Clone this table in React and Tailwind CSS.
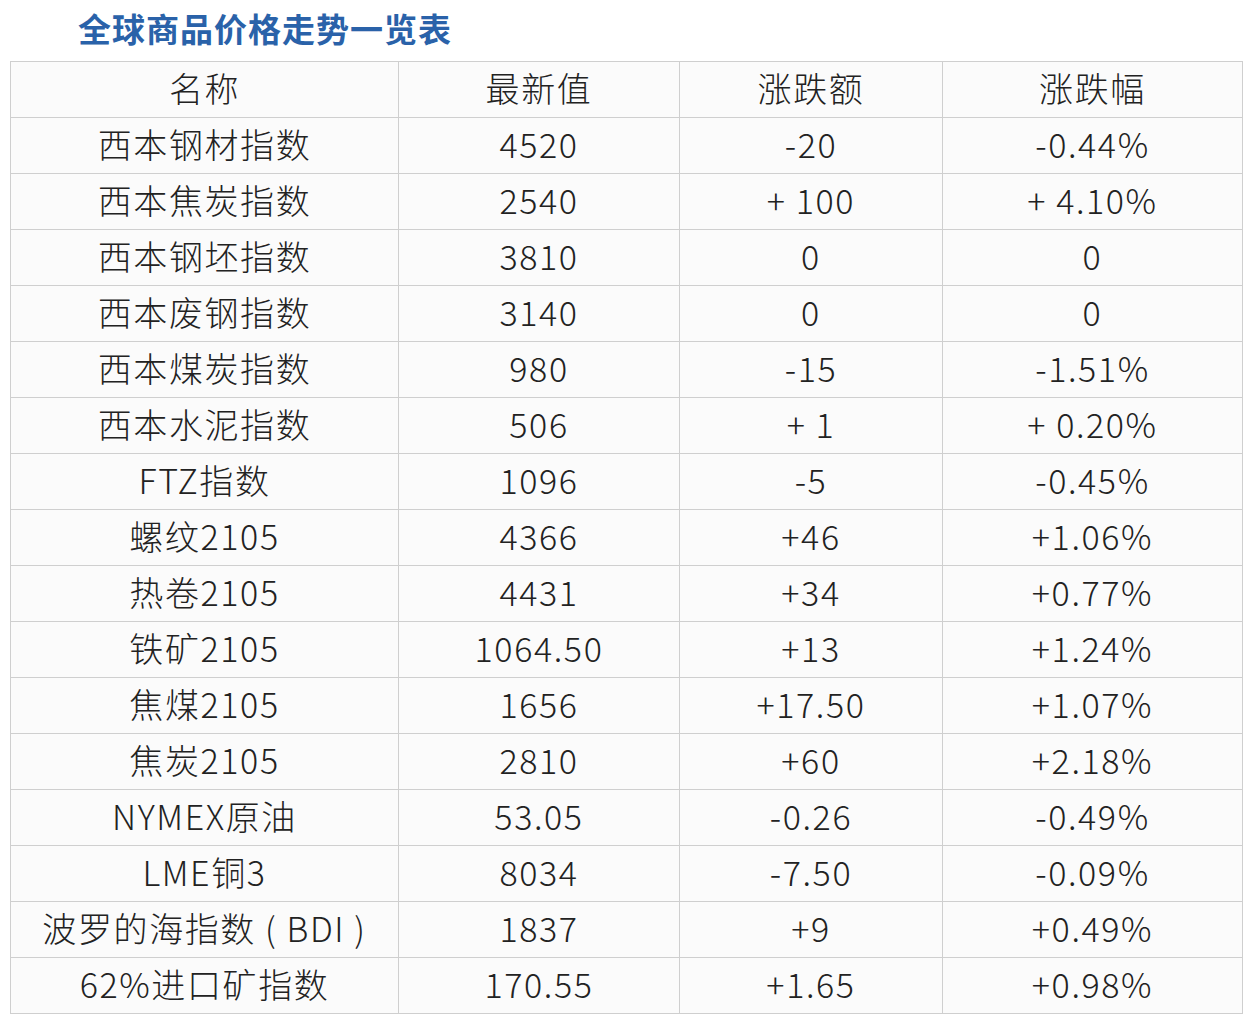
import React from "react";

const rows = [
  ["西本钢材指数", "4520", "-20", "-0.44%"],
  ["西本焦炭指数", "2540", "+ 100", "+ 4.10%"],
  ["西本钢坯指数", "3810", "0", "0"],
  ["西本废钢指数", "3140", "0", "0"],
  ["西本煤炭指数", "980", "-15", "-1.51%"],
  ["西本水泥指数", "506", "+ 1", "+ 0.20%"],
  ["FTZ指数", "1096", "-5", "-0.45%"],
  ["螺纹2105", "4366", "+46", "+1.06%"],
  ["热卷2105", "4431", "+34", "+0.77%"],
  ["铁矿2105", "1064.50", "+13", "+1.24%"],
  ["焦煤2105", "1656", "+17.50", "+1.07%"],
  ["焦炭2105", "2810", "+60", "+2.18%"],
  ["NYMEX原油", "53.05", "-0.26", "-0.49%"],
  ["LME铜3", "8034", "-7.50", "-0.09%"],
  ["波罗的海指数 ( BDI )", "1837", "+9", "+0.49%"],
  ["62%进口矿指数", "170.55", "+1.65", "+0.98%"],
];

const cell = "border border-[#cfcfcf] h-[56px] p-0 pb-[4px] text-center align-middle whitespace-nowrap";

export default function App() {
  return (
    <div
      className="w-[1260px] h-[1028px] bg-white text-[#222] overflow-hidden"
      style={{ fontFamily: '"Noto Sans CJK SC", "Noto Sans", sans-serif' }}
    >
      <div className="h-[61px] pl-[78px] pt-[6px]">
        <h1 className="text-[33px] leading-[44px] font-bold text-[#2a62a9] tracking-[1px]">
          全球商品价格走势一览表
        </h1>
      </div>
      <table className="ml-[10px] border-collapse bg-[#fbfbfb] text-[34px] font-light leading-none tracking-[1.6px] table-fixed w-[1232px]">
        <colgroup>
          <col className="w-[388px]" />
          <col className="w-[281px]" />
          <col className="w-[263px]" />
          <col className="w-[300px]" />
        </colgroup>
        <thead>
          <tr>
            <th className={cell + " font-light"}>名称</th>
            <th className={cell + " font-light"}>最新值</th>
            <th className={cell + " font-light"}>涨跌额</th>
            <th className={cell + " font-light"}>涨跌幅</th>
          </tr>
        </thead>
        <tbody>
          {rows.map((r, i) => (
            <tr key={i}>
              {r.map((c, j) => (
                <td key={j} className={cell}>
                  {c}
                </td>
              ))}
            </tr>
          ))}
        </tbody>
      </table>
    </div>
  );
}
